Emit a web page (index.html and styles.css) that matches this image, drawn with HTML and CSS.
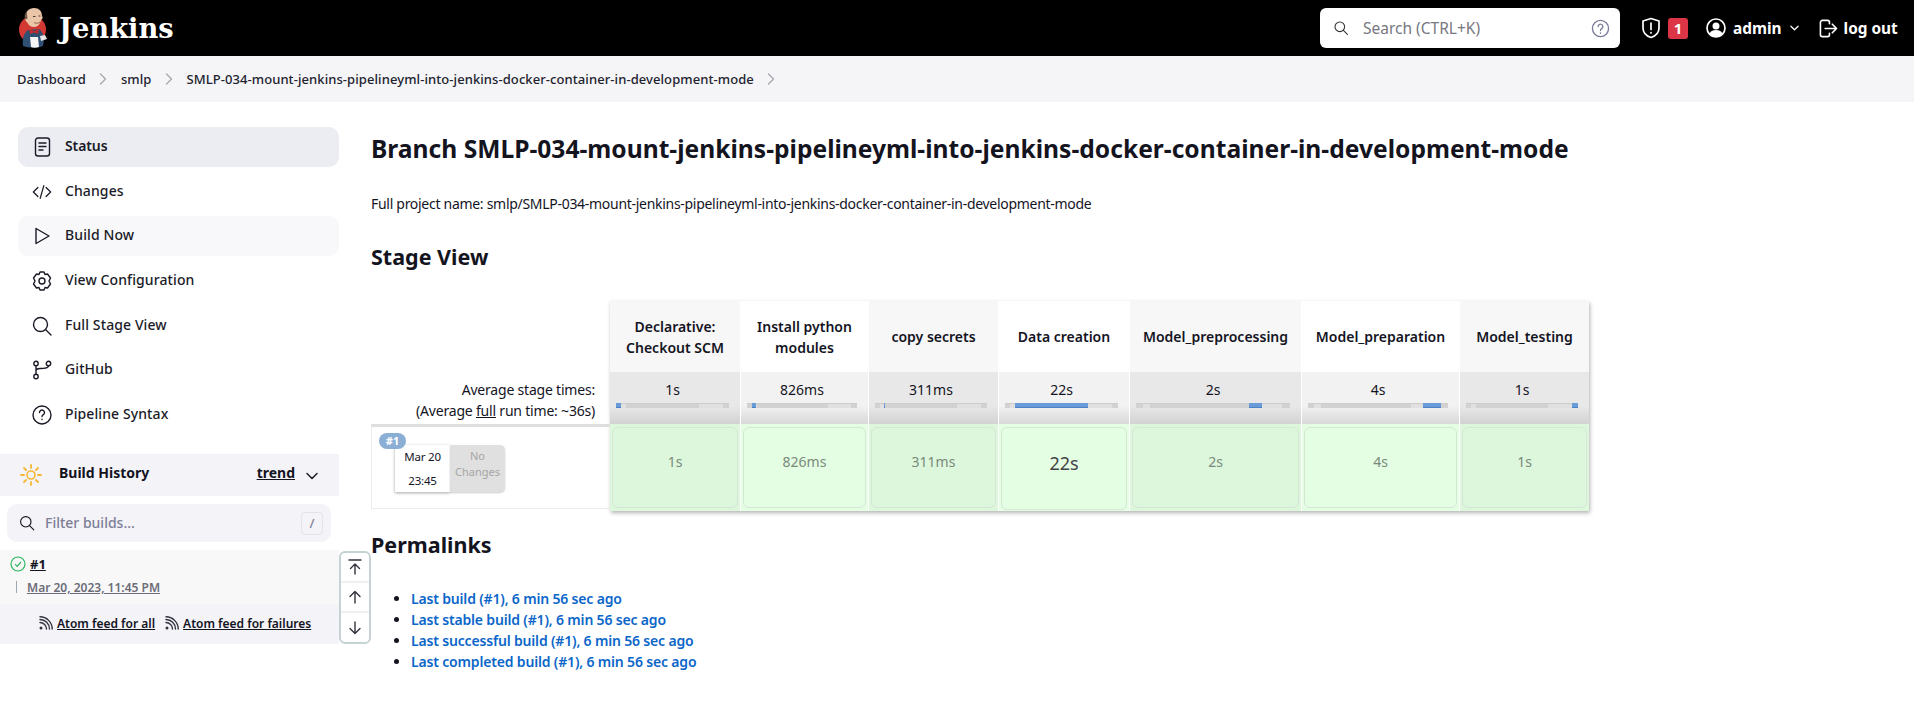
FILE: index.html
```html
<!DOCTYPE html>
<html lang="en">
<head>
    <meta charset="UTF-8">
    <title>SMLP-034 [Jenkins]</title>
    <link rel="stylesheet" href="styles.css">
</head>
<body>

    <header class="topbar">
        <a class="brand">
            <svg class="brand-logo" viewBox="0 0 30 40" width="30" height="40">
                <circle cx="14.500" cy="21.500" r="13.500" fill="#d33833"/>
                <path d="M5 38C4 30 6 25 10 22l11-1c4 3 6 9 4 17-6 2-14 2-20 0z" fill="#2f4f73"/>
                <path d="M7 10C7 4 11 0 16 0s8 3 8 8c1 1 1 3-1 4-1 4-3 7-7 7-3 0-6-2-7-5-1 0-2-2-2-4z" fill="#eac5a8"/>
                <path d="M7 11c-1-3 0-6 2-8 0 3 0 5 .5 7 0 1-1 1.500-2.500 1z" fill="#6f5a4d"/>
                <path d="M15 8.500h2.500M20.500 8h2" stroke="#4a3a30" stroke-width="1"/>
                <path d="M16 14.500c2 1.200 4 1 6-.5" fill="none" stroke="#8a5a48" stroke-width=".9"/>
                <path d="M11 21l5 2 5-2-1 5-4-1.500L12 26z" fill="#c22b2b"/>
                <path d="M12 29h8l1 10c-3 1-6 1-8 0z" fill="#f4f4f4"/>
                <path d="M22 28l5-1 2 4-6 2z" fill="#e8e8e8"/>
            </svg>
            <span class="brand-name">Jenkins</span>
        </a>
        <div class="top-search">
            <svg class="ic-16" viewBox="0 0 20 20"><circle cx="8.500" cy="8.500" r="6" class="ln"/><path d="M13 13l5 5" class="ln"/></svg>
            <span class="top-search-text">Search (CTRL+K)</span>
            <svg class="help" viewBox="0 0 20 20" width="19" height="19"><circle cx="10" cy="10" r="8.500" class="ln"/><path d="M7.500 8a2.500 2.500 0 1 1 3.800 2.100c-.8.500-1.300 1-1.300 2M10 14.600v.4" class="ln"/></svg>
        </div>
        <div class="top-actions">
            <svg class="shield" viewBox="0 0 20 22" width="20" height="22"><path d="M10 1.500l8 2.500v7c0 5-3.500 8-8 9.500C5.500 19 2 16 2 11V4z" class="ln"/><path d="M10 6v6.500M10 15.500v.5" class="ln"/></svg>
            <span class="badge-red">1</span>
            <svg class="user" viewBox="0 0 20 20" width="20" height="20"><circle cx="10" cy="10" r="9" class="ln"/><circle cx="10" cy="8" r="3.500" fill="#fff"/><path d="M3.500 15.500C5 12.800 7 12 10 12s5 .8 6.500 3.500C15 18 12.500 19 10 19s-5-1-6.500-3.500z" fill="#fff"/></svg>
            <span class="top-link admin">admin</span>
            <svg class="chev" viewBox="0 0 10 6" width="9" height="6"><path d="M1 1l4 4 4-4" class="ln"/></svg>
            <svg class="logout" viewBox="0 0 20 20" width="19" height="19"><path d="M11 5V3.500A2 2 0 0 0 9 1.500H3.500a2 2 0 0 0-2 2v13a2 2 0 0 0 2 2H9a2 2 0 0 0 2-2V15M6.500 10H18.500M14 5.500l4.500 4.500-4.500 4.500" class="ln"/></svg>
            <span class="top-link out">log out</span>
        </div>
    </header>

    <nav class="crumbs">
        <a>Dashboard</a>
        <svg class="crumb-sep" viewBox="0 0 8 12" width="8" height="12"><path d="M1.500 1l5 5-5 5" class="ln"/></svg>
        <a>smlp</a>
        <svg class="crumb-sep" viewBox="0 0 8 12" width="8" height="12"><path d="M1.500 1l5 5-5 5" class="ln"/></svg>
        <a>SMLP-034-mount-jenkins-pipelineyml-into-jenkins-docker-container-in-development-mode</a>
        <svg class="crumb-sep" viewBox="0 0 8 12" width="8" height="12"><path d="M1.500 1l5 5-5 5" class="ln"/></svg>
    </nav>

    <div class="page">
        <aside class="sidebar">
            <div class="tasks">
                <a class="task active">
                    <svg class="ic" viewBox="0 0 20 20"><rect x="3.500" y="1" width="14" height="18" rx="2.500" class="ln"/><path d="M7 6h7M7 9.500h7M7 13h4" class="ln"/></svg>
                    <span>Status</span>
                </a>
                <a class="task">
                    <svg class="ic" viewBox="0 0 22 20"><path d="M6.500 5L1.500 10l5 5M15.500 5l5 5-5 5M13 3L9 17" class="ln"/></svg>
                    <span>Changes</span>
                </a>
                <a class="task hover">
                    <svg class="ic" viewBox="0 0 20 20"><path d="M4 2.500L17 10 4 17.500z" class="ln"/></svg>
                    <span>Build Now</span>
                </a>
                <a class="task">
                    <svg class="ic" viewBox="0 0 20 20"><path d="M8 1h4l1 2.500 2.500-.5L18.500 7 17 10l1.500 3-3 4-2.500-.5L12 19H8l-1-2.500-2.500.5-3-4L3 10 1.500 7l3-4 2.500.5z" class="ln"/><circle cx="10" cy="10" r="3" class="ln"/></svg>
                    <span>View Configuration</span>
                </a>
                <a class="task">
                    <svg class="ic" viewBox="0 0 20 20"><circle cx="8.500" cy="8.500" r="7" class="ln"/><path d="M13.500 13.500l5.500 5.500" class="ln"/></svg>
                    <span>Full Stage View</span>
                </a>
                <a class="task">
                    <svg class="ic" viewBox="0 0 20 20"><circle cx="4" cy="3.500" r="2.200" class="ln"/><circle cx="4" cy="16.500" r="2.200" class="ln"/><circle cx="16.500" cy="3.500" r="2.200" class="ln"/><path d="M4 5.700v8.600M4 11c0-2 1-2.500 4-2.500 5 0 8.500-.5 8.500-2.800" class="ln"/></svg>
                    <span>GitHub</span>
                </a>
                <a class="task">
                    <svg class="ic" viewBox="0 0 20 20"><circle cx="10" cy="10" r="9" class="ln"/><path d="M7.500 7.500a2.500 2.500 0 1 1 3.800 2.100c-.8.500-1.300 1-1.300 2M10 14.200v.4" class="ln"/></svg>
                    <span>Pipeline Syntax</span>
                </a>
            </div>

            <section class="history">
                <div class="history-head">
                    <svg class="sun" viewBox="0 0 22 22" width="22" height="22">
                        <circle cx="11" cy="11" r="4" fill="none" stroke="#f7b733" stroke-width="1.600"/>
                        <path d="M11 1v3M11 18v3M1 11h3M18 11h3M4 4l2 2M16 16l2 2M18 4l-2 2M6 16l-2 2" stroke="#f7b733" stroke-width="1.800" stroke-linecap="round"/>
                    </svg>
                    <span class="history-title">Build History</span>
                    <a class="trend">trend</a>
                    <svg class="trend-chev" viewBox="0 0 12 8" width="12" height="8"><path d="M1 1.500l5 5 5-5" class="ln"/></svg>
                </div>
                <div class="filter">
                    <svg class="ic-16" viewBox="0 0 20 20"><circle cx="8.500" cy="8.500" r="6.500" class="ln"/><path d="M13.500 13.500l5 5" class="ln"/></svg>
                    <span class="filter-text">Filter builds...</span>
                    <kbd class="slash">/</kbd>
                </div>
                <div class="build-row">
                    <div class="build-line">
                        <svg class="ok" viewBox="0 0 16 16" width="16" height="16"><circle cx="8" cy="8" r="7" fill="none" stroke="#2fb560" stroke-width="1.200"/><path d="M5 8.200l2.200 2.200L11 6" fill="none" stroke="#2fb560" stroke-width="1.200"/></svg>
                        <a class="build-num">#1</a>
                    </div>
                    <div class="build-line second">
                        <span class="pipe"></span>
                        <a class="build-date">Mar 20, 2023, 11:45 PM</a>
                    </div>
                </div>
                <div class="feeds">
                    <svg class="rss" viewBox="0 0 14 14" width="14" height="14"><circle cx="2" cy="12" r="1.500" fill="#33333f"/><path d="M1 6.500A6.500 6.500 0 0 1 7.500 13M1 3.500A9.500 9.500 0 0 1 10.500 13M1 .8A12.200 12.200 0 0 1 13.200 13" class="ln"/></svg>
                    <a>Atom feed for all</a>
                    <svg class="rss second" viewBox="0 0 14 14" width="14" height="14"><circle cx="2" cy="12" r="1.500" fill="#33333f"/><path d="M1 6.500A6.500 6.500 0 0 1 7.500 13M1 3.500A9.500 9.500 0 0 1 10.500 13M1 .8A12.200 12.200 0 0 1 13.200 13" class="ln"/></svg>
                    <a>Atom feed for failures</a>
                </div>
                <div class="pager">
                    <div class="pager-btn"><svg viewBox="0 0 14 16" width="14" height="16"><path d="M1 1h12M7 15V5M2.500 9.500L7 5l4.500 4.500" class="ln"/></svg></div>
                    <div class="pager-btn"><svg viewBox="0 0 14 14" width="14" height="14"><path d="M7 13V1.500M2 6.500l5-5 5 5" class="ln"/></svg></div>
                    <div class="pager-btn"><svg viewBox="0 0 14 14" width="14" height="14"><path d="M7 1v11.500M2 7.500l5 5 5-5" class="ln"/></svg></div>
                </div>
            </section>
        </aside>

        <main class="content">
            <h1>Branch SMLP-034-mount-jenkins-pipelineyml-into-jenkins-docker-container-in-development-mode</h1>
            <p class="full-name">Full project name: smlp/SMLP-034-mount-jenkins-pipelineyml-into-jenkins-docker-container-in-development-mode</p>
            <h2 class="stage-title">Stage View</h2>

            <div class="stage-view">
                <div class="stage-side">
                    <div class="side-spacer"></div>
                    <div class="side-avg">
                        <div>Average stage times:</div>
                        <div>(Average <u>full</u> run time: ~36s)</div>
                    </div>
                    <div class="side-build">
                        <span class="build-pill">#1</span>
                        <div class="date-card">
                            <span>Mar 20</span>
                            <span>23:45</span>
                        </div>
                        <div class="no-changes">No Changes</div>
                    </div>
                </div>

                <div class="stage-table">
                    <div class="col col-1">
                        <div class="col-head">Declarative: Checkout SCM</div>
                        <div class="col-avg">1s<div class="bar"><span class="on" style="width:4.5%"></span><span style="width:3.5%"></span><span style="width:1%"></span><span style="width:64.5%"></span><span style="width:8.5%"></span><span style="width:13%"></span><span style="width:5%"></span></div></div>
                        <div class="col-cell"><div class="cell-box">1s</div></div>
                    </div>
                    <div class="col col-2">
                        <div class="col-head">Install python modules</div>
                        <div class="col-avg">826ms<div class="bar"><span style="width:4.5%"></span><span class="on" style="width:3.5%"></span><span style="width:1%"></span><span style="width:64.5%"></span><span style="width:8.5%"></span><span style="width:13%"></span><span style="width:5%"></span></div></div>
                        <div class="col-cell"><div class="cell-box">826ms</div></div>
                    </div>
                    <div class="col col-3">
                        <div class="col-head">copy secrets</div>
                        <div class="col-avg">311ms<div class="bar"><span style="width:4.5%"></span><span style="width:3.5%"></span><span class="on" style="width:1%"></span><span style="width:64.5%"></span><span style="width:8.5%"></span><span style="width:13%"></span><span style="width:5%"></span></div></div>
                        <div class="col-cell"><div class="cell-box">311ms</div></div>
                    </div>
                    <div class="col col-4">
                        <div class="col-head">Data creation</div>
                        <div class="col-avg">22s<div class="bar"><span style="width:4.5%"></span><span style="width:3.5%"></span><span style="width:1%"></span><span class="on" style="width:64.5%"></span><span style="width:8.5%"></span><span style="width:13%"></span><span style="width:5%"></span></div></div>
                        <div class="col-cell"><div class="cell-box big">22s</div></div>
                    </div>
                    <div class="col col-5">
                        <div class="col-head">Model_preprocessing</div>
                        <div class="col-avg">2s<div class="bar"><span style="width:4.5%"></span><span style="width:3.5%"></span><span style="width:1%"></span><span style="width:64.5%"></span><span class="on" style="width:8.5%"></span><span style="width:13%"></span><span style="width:5%"></span></div></div>
                        <div class="col-cell"><div class="cell-box">2s</div></div>
                    </div>
                    <div class="col col-6">
                        <div class="col-head">Model_preparation</div>
                        <div class="col-avg">4s<div class="bar"><span style="width:4.5%"></span><span style="width:3.5%"></span><span style="width:1%"></span><span style="width:64.5%"></span><span style="width:8.5%"></span><span class="on" style="width:13%"></span><span style="width:5%"></span></div></div>
                        <div class="col-cell"><div class="cell-box">4s</div></div>
                    </div>
                    <div class="col col-7">
                        <div class="col-head">Model_testing</div>
                        <div class="col-avg">1s<div class="bar"><span style="width:4.5%"></span><span style="width:3.5%"></span><span style="width:1%"></span><span style="width:64.5%"></span><span style="width:8.5%"></span><span style="width:13%"></span><span class="on" style="width:5%"></span></div></div>
                        <div class="col-cell"><div class="cell-box">1s</div></div>
                    </div>
                </div>
            </div>

            <h2 class="permalinks-title">Permalinks</h2>
            <ul class="permalinks">
                <li><a>Last build (#1), 6 min 56 sec ago</a></li>
                <li><a>Last stable build (#1), 6 min 56 sec ago</a></li>
                <li><a>Last successful build (#1), 6 min 56 sec ago</a></li>
                <li><a>Last completed build (#1), 6 min 56 sec ago</a></li>
            </ul>
        </main>
    </div>

</body>
</html>
```

FILE: styles.css
```css
* { box-sizing: border-box; }
body { margin: 0; font-family: "Noto Sans", sans-serif; font-size: 14px; color: #14141f; background: #fff; overflow: hidden; }
svg { display: block; flex: none; }
.ln { fill: none; stroke: currentColor; stroke-width: 1.400; stroke-linecap: round; stroke-linejoin: round; }

/* top bar */
.topbar { display: flex; align-items: center; height: 56px; background: #000; color: #fff; padding-left: 18px; }
.brand { display: flex; align-items: center; }
.brand-name { font-family: "DejaVu Serif", serif; font-weight: 700; font-size: 27.300px; margin-left: 11px; }
.top-search { display: flex; align-items: center; width: 300px; height: 40px; margin-left: auto; padding: 0 10px 0 13px; background: #fff; border-radius: 6px; color: #333; }
.ic-16 { width: 16px; height: 16px; }
.top-search-text { margin-left: 14px; font-size: 15.500px; color: #77777f; }
.help { margin-left: auto; color: #7b7b9c; }
.top-actions { display: flex; align-items: center; width: 280px; margin-left: 14px; padding-left: 7px; font-weight: 700; }
.badge-red { display: block; width: 20px; height: 21px; margin-left: 7px; background: #dc3545; border-radius: 3px; text-align: center; line-height: 21px; font-size: 15px; }
.user { margin-left: 18px; }
.top-link { margin-left: 7px; font-size: 15.400px; }
.top-link.out { margin-left: 6px; }
.chev { margin-left: 8px; }
.logout { margin-left: 20px; }
.shield .ln, .user .ln, .logout .ln { stroke-width: 1.700; }

/* breadcrumb */
.crumbs { display: flex; align-items: center; height: 46px; padding-left: 17px; background: #f5f5f8; font-size: 13px; font-weight: 500; letter-spacing: .08px; color: #22222e; }
.crumb-sep { margin: 0 13.500px; color: #a9a9b2; }

.page { display: flex; }

/* side panel */
.sidebar { width: 339px; flex: none; padding-top: 25px; }
.tasks { display: flex; flex-direction: column; gap: 4.700px; padding-left: 18px; }
.task { display: flex; align-items: center; height: 40px; padding-left: 14px; border-radius: 10px; font-weight: 500; letter-spacing: .1px; color: #1b1b28; }
.task span { margin-bottom: 3px; }
.task .ic { width: 20px; height: 20px; margin-right: 13px; }
.task.active { background: #ecedf3; font-weight: 600; letter-spacing: -.1px; }
.task.hover { background: #f8f8fb; }

.history { position: relative; margin-top: 19px; }
.history-head { display: flex; align-items: center; height: 42px; padding-left: 20px; background: #f3f3f8; }
.history-title { margin: 0 0 5px 17px; font-weight: 700; }
.trend { margin: 0 0 5px auto; font-weight: 700; text-decoration: underline; }
.trend-chev { margin: 2px 21px 0 11px; }
.filter { display: flex; align-items: center; height: 38px; margin: 8px 8px 8px 7px; padding: 0 8px 0 12px; background: #f3f3f8; border-radius: 10px; }
.filter-text { margin: 0 0 2px 10px; font-weight: 500; color: #7d7d96; }
.slash { margin-left: auto; width: 22px; height: 23px; border: 1px solid #e3e3ea; border-radius: 4px; text-align: center; font: 500 13px/21px "Noto Sans", sans-serif; color: #7d7d96; }
.build-row { height: 54px; padding: 5px 0 0 10px; background: #f8f8f8; font-size: 12px; font-weight: 600; }
.build-line { display: flex; align-items: center; height: 18px; }
.build-line.second { margin-top: 5px; }
.ok { margin-right: 4px; }
.build-num { text-decoration: underline; font-size: 13px; font-weight: 700; }
.pipe { width: 1px; height: 12px; margin-left: 6px; background: #9ba7b3; }
.build-date { margin-left: 10px; color: #6d6d78; text-decoration: underline; }
.feeds { display: flex; align-items: center; height: 40px; padding: 0 0 2px 39px; background: #f3f3f8; font-size: 12px; font-weight: 600; }
.feeds a { margin-left: 4px; text-decoration: underline; }
.rss { color: #33333f; }
.rss.second { margin-left: 10px; }
.pager { position: absolute; left: 339px; bottom: 0; width: 32px; height: 93px; border: 2px solid #c7d2d4; border-radius: 6px; background: #fff; color: #33333f; }
.pager-btn { display: flex; align-items: center; justify-content: center; height: 30px; border-bottom: 2px solid #f0f0f2; }
.pager-btn:last-child { border-bottom: none; }

/* main column */
.content { flex: 1; margin-left: 32px; }
h1 { margin: 31px 0 0; font-size: 24.600px; line-height: 32px; font-weight: 700; }
.full-name { margin: 28px 0 0; line-height: 21px; letter-spacing: -.29px; }
h2 { font-size: 21.500px; line-height: 28px; font-weight: 700; margin: 0; }
.stage-title { margin-top: 28.500px; }

/* stage view */
.stage-view { display: flex; margin-top: 30.500px; }
.stage-side { width: 239px; flex: none; }
.side-spacer { height: 72px; }
.side-avg { height: 51px; padding: 6px 15px 0 0; text-align: right; line-height: 21px; letter-spacing: -.2px; }
.side-build { position: relative; display: flex; height: 85px; padding: 18px 0 0 23px; border: 1px solid #ececec; border-top: 3px solid #dedede; border-right: none; }
.build-pill { position: absolute; left: 7px; top: 6px; width: 27px; height: 16px; border-radius: 8px; background: #8aaed4; color: #fff; font-size: 11px; font-weight: 700; line-height: 16px; text-align: center; }
.date-card { display: flex; flex-direction: column; justify-content: space-around; width: 55px; height: 47px; background: #fff; box-shadow: 0 1px 3px rgba(0, 0, 0, .35); font-size: 11.500px; letter-spacing: -.2px; text-align: center; }
.no-changes { width: 55px; height: 47px; padding: 3px 2px; background: #e0e0e0; border-radius: 0 5px 5px 0; box-shadow: 0 1px 2px rgba(0, 0, 0, .2); font-size: 11px; line-height: 16px; text-align: center; color: #a5a5a5; }

.stage-table { display: flex; gap: 1px; height: 210px; background: #fff; box-shadow: 1px 2px 4px rgba(0, 0, 0, .3); }
.col { display: flex; flex-direction: column; }
.col-1 { width: 130px; }
.col-2 { width: 127px; }
.col-3 { width: 129px; }
.col-4 { width: 130px; }
.col-5 { width: 171px; }
.col-6 { width: 157px; }
.col-7 { width: 129px; }
.col-head { display: flex; align-items: center; justify-content: center; height: 71px; padding: 0 8px; background: #f7f7f7; text-align: center; font-weight: 600; line-height: 21px; }
.col-avg { height: 52px; padding: 8px 11px 0 6px; text-align: center; line-height: 20px; background: linear-gradient(#e8e8e8 65%, #d2d2d2); }
.bar { display: flex; height: 5px; margin-top: 3px; background: #e0e0e0; }
.bar span { display: block; height: 5px; background: #e0e0e0; box-shadow: inset 0 1px 0 #cdcdcd; }
.bar span:nth-child(1), .bar span:nth-child(4), .bar span:nth-child(7) { background: #d2d2d2; }
.bar span.on, .bar span.on:nth-child(n) { background: #6a9bd9; box-shadow: inset 0 -1px 0 #4d82c7; }
.col-cell { flex: 1; padding: 3px 2px 0; background: #ddf7dd; }
.cell-box { display: flex; align-items: center; justify-content: center; height: 81px; padding-bottom: 12px; background: #ddf7dd; border: 1px solid #d5e6d5; border-radius: 6px; color: #7a8a7a; font-size: 14px; }
.cell-box.big { height: 83px; font-size: 18px; color: #444; }
.col:nth-child(even) .col-head { background: #fff; }
.col:nth-child(even) .col-avg { background: linear-gradient(#f2f2f2 65%, #d8d8d8); }
.col:nth-child(even) .col-cell, .col:nth-child(even) .cell-box { background: #e4fee4; }

/* permalinks */
.permalinks-title { margin-top: 20px; }
.permalinks { margin: 28.500px 0 0; padding-left: 40px; line-height: 21px; font-weight: 600; letter-spacing: -.17px; color: #0b66c9; }
.permalinks li::marker { color: #14141f; }
```
